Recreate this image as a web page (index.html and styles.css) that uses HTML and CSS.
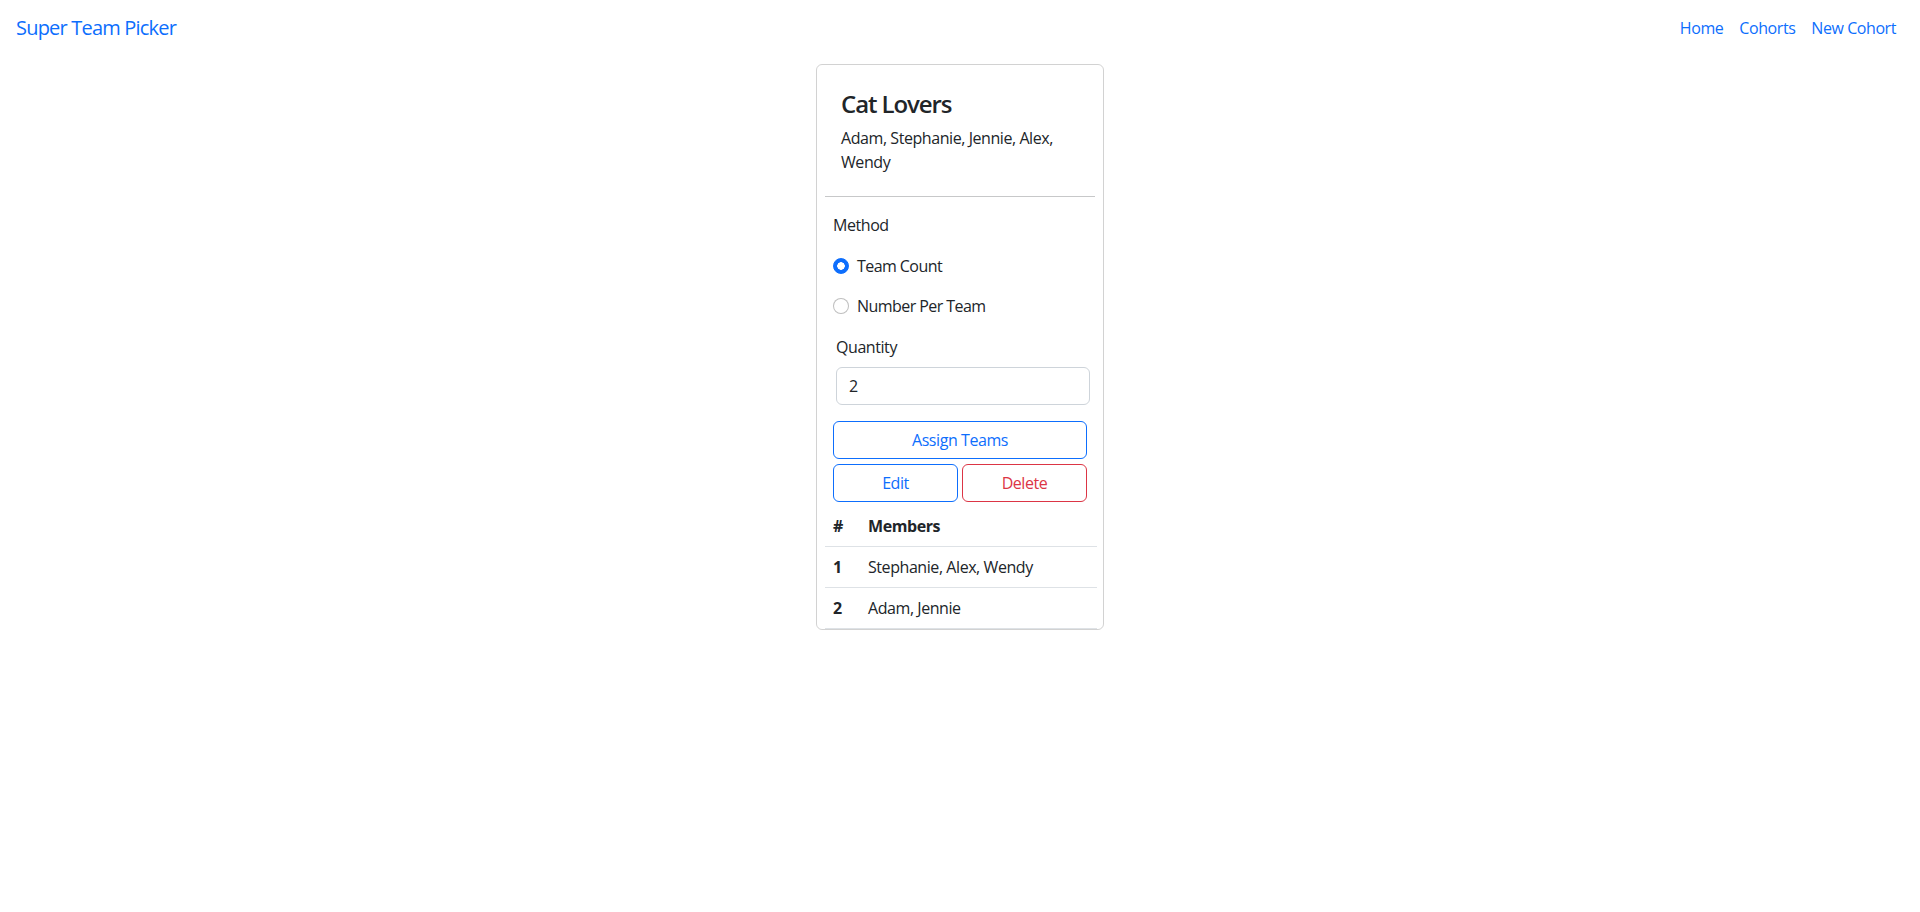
FILE: index.html
```html
<!DOCTYPE html>
<html lang="en">
<head>
<meta charset="utf-8">
<title>Super Team Picker</title>
<link rel="stylesheet" href="styles.css">
</head>
<body>
<nav class="navbar">
  <a class="brand" href="#">Super Team Picker</a>
  <ul class="nav">
    <li><a class="nav-link" href="#">Home</a></li>
    <li><a class="nav-link" href="#">Cohorts</a></li>
    <li><a class="nav-link" href="#">New Cohort</a></li>
  </ul>
</nav>
<main class="main">
  <div class="card">
    <div class="inner">
      <div class="card-body">
        <h4 class="card-title">Cat Lovers</h4>
        <p class="card-text">Adam, Stephanie, Jennie, Alex, Wendy</p>
      </div>
      <hr class="divider">
      <form class="form">
        <div class="label">Method</div>
        <label class="check first">
          <input class="radio" type="radio" name="method" checked>
          <span>Team Count</span>
        </label>
        <label class="check">
          <input class="radio" type="radio" name="method">
          <span>Number Per Team</span>
        </label>
        <div class="qty">
          <div class="label qty-label">Quantity</div>
          <input class="input" type="text" value="2">
        </div>
        <button type="button" class="btn btn-primary assign">Assign Teams</button>
        <div class="btn-row">
          <button type="button" class="btn btn-primary">Edit</button>
          <button type="button" class="btn btn-danger">Delete</button>
        </div>
      </form>
      <table class="table">
        <thead>
          <tr><th class="num">#</th><th>Members</th></tr>
        </thead>
        <tbody>
          <tr><th class="num">1</th><td>Stephanie, Alex, Wendy</td></tr>
          <tr><th class="num">2</th><td>Adam, Jennie</td></tr>
        </tbody>
      </table>
    </div>
  </div>
</main>
</body>
</html>
```
FILE: styles.css
```css
* { box-sizing: border-box; }
html, body { margin: 0; padding: 0; }
body {
  font-family: "Segoe UI", "Open Sans", "Noto Sans", sans-serif;
  font-size: 16px;
  line-height: 24px;
  letter-spacing: -0.027em;
  color: #212529;
  background: #fff;
}
a { text-decoration: none; color: #0d6efd; }

.navbar {
  display: flex;
  justify-content: space-between;
  align-items: center;
  padding: 8px 16px;
}
.brand {
  font-size: 20px;
  line-height: 30px;
  padding: 5px 0;
  letter-spacing: -0.04em;
}
.nav {
  display: flex;
  list-style: none;
  margin: 0;
  padding: 0;
}
.nav-link {
  display: block;
  padding: 8px;
}

.main {
  display: flex;
  justify-content: center;
  margin-top: 8px;
}
.card {
  width: 288px;
  border: 1px solid rgba(0,0,0,.175);
  border-radius: 6px;
}
.inner {
  padding: 8px 6px 0 8px;
}
.card-body { padding: 17px 16px 16px; }
.card-title {
  margin: 0 0 7px;
  font-size: 24px;
  line-height: 28.8px;
  font-weight: 600;
  letter-spacing: -0.045em;
}
.card-text { margin: 0; }
.divider {
  margin: 6px 2px 0 0;
  border: 0;
  border-top: 1px solid rgba(33,37,41,.25);
}
.form {
  padding: 16px 10px 0 8px;
}
.label { line-height: 24px; }
.check {
  display: flex;
  align-items: center;
  gap: 8px;
  height: 24px;
  margin-top: 16px;
  letter-spacing: -0.035em;
}
.check.first { margin-top: 17px; }
.radio {
  appearance: none;
  -webkit-appearance: none;
  width: 16px;
  height: 16px;
  margin: 0;
  border: 1px solid rgba(0,0,0,.25);
  border-radius: 50%;
  background: #fff;
  flex: none;
}
.radio:checked {
  border-color: #0d6efd;
  background: radial-gradient(circle, #fff 0 3.5px, #0d6efd 4px);
}
.qty {
  margin: 17px -3px 0 3px;
}
.qty-label { margin-bottom: 8px; }
.input {
  display: block;
  width: 100%;
  height: 38px;
  padding: 6px 12px;
  font: inherit;
  letter-spacing: inherit;
  color: #212529;
  border: 1px solid #ced4da;
  border-radius: 6px;
  background: #fff;
}
.btn {
  display: block;
  width: 100%;
  height: 38px;
  padding: 6px 12px;
  font: inherit;
  letter-spacing: inherit;
  background: #fff;
  border-radius: 6px;
  text-align: center;
}
.btn-primary { color: #0d6efd; border: 1px solid #0d6efd; }
.btn-danger { color: #dc3545; border: 1px solid #dc3545; }
.assign { margin-top: 16px; }
.btn-row {
  display: grid;
  grid-template-columns: 1fr 1fr;
  gap: 4px;
  margin-top: 5px;
}
.table {
  width: 100%;
  margin-top: 4px;
  border-collapse: collapse;
}
.table th, .table td {
  padding: 8px;
  text-align: left;
  border-bottom: 1px solid #dee2e6;
  line-height: 24px;
}
.table th { font-weight: 700; }
.table .num { width: 35px; }
```
